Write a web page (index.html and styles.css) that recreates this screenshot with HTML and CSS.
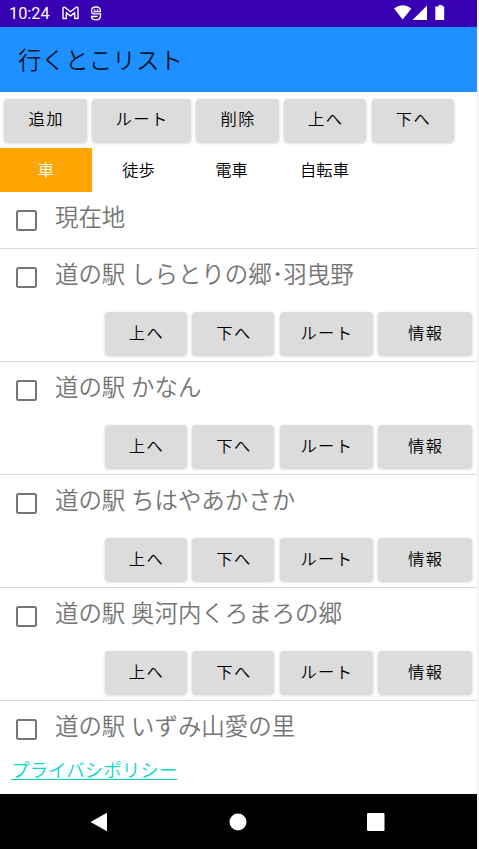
FILE: index.html
```html
<!DOCTYPE html>
<html lang="ja">
<head>
<meta charset="utf-8">
<title>行くとこリスト</title>
<link rel="stylesheet" href="styles.css">
</head>
<body>
<div class="screen">
  <div class="status">
    <span class="clock">10:24</span>
    <svg class="mail" width="17" height="14" viewBox="0 0 17 14" fill="none" stroke="#fff" stroke-width="1.4" stroke-linejoin="round"><path d="M1 12.5V2.2Q1.2.8 2.8 1.2L8.5 5.8 14.2 1.2Q15.8.8 16 2.2V12.5H12.7V6.6L8.5 10 4.3 6.6V12.5Z"/></svg>
    <svg class="debug" width="12" height="15" viewBox="0 0 12 15" fill="none" stroke="#fff" stroke-width="1.3"><path d="M11 5.500H3.500M10.500 5Q10.500 1 6 1T1.500 4.500Q1.500 7.800 4 7.800H10.500V9.500Q10.500 13.800 6 13.800T1.500 10.500H7.500"/><path d="M4.500 3V4.500M7.500 3V4.500" stroke-width="1"/></svg>
    <svg class="signals" width="52" height="16" viewBox="0 0 52 16" fill="#fff"><path d="M0 3.5Q8.7-3.2 17.4 3.5L8.7 14.5ZM33 .5V15H18.5ZM42.8 1.500H44.600V0H48.400V1.500H50.200V15H41.300V1.500Z"/></svg>
  </div>
  <header class="title">行くとこリスト</header>
  <div class="toolbar">
    <button class="btn">追加</button><button class="btn wide">ルート</button><button class="btn">削除</button><button class="btn">上へ</button><button class="btn">下へ</button>
  </div>
  <nav class="tabs"><span class="tab active">車</span><span class="tab">徒歩</span><span class="tab">電車</span><span class="tab">自転車</span></nav>
  <main class="list">
    <section class="row here"><div class="place"><i class="check"></i><span>現在地</span></div></section>
    <section class="row"><div class="place"><i class="check"></i><span>道の駅 しらとりの郷･羽曳野</span></div>
      <div class="actions"><button class="btn">上へ</button><button class="btn">下へ</button><button class="btn route">ルート</button><button class="btn route">情報</button></div></section>
    <section class="row"><div class="place"><i class="check"></i><span>道の駅 かなん</span></div>
      <div class="actions"><button class="btn">上へ</button><button class="btn">下へ</button><button class="btn route">ルート</button><button class="btn route">情報</button></div></section>
    <section class="row"><div class="place"><i class="check"></i><span>道の駅 ちはやあかさか</span></div>
      <div class="actions"><button class="btn">上へ</button><button class="btn">下へ</button><button class="btn route">ルート</button><button class="btn route">情報</button></div></section>
    <section class="row"><div class="place"><i class="check"></i><span>道の駅 奥河内くろまろの郷</span></div>
      <div class="actions"><button class="btn">上へ</button><button class="btn">下へ</button><button class="btn route">ルート</button><button class="btn route">情報</button></div></section>
    <section class="row last"><div class="place"><i class="check"></i><span>道の駅 いずみ山愛の里</span></div></section>
  </main>
  <footer class="policy"><a class="link">プライバシポリシー</a></footer>
  <div class="navbar">
    <svg width="477" height="55" viewBox="0 0 477 55" fill="#fff"><path d="M107 18.7V37.3L90.5 28Z"/><circle cx="238" cy="28" r="8.5"/><rect x="367" y="19" width="17.5" height="18" rx="1"/></svg>
  </div>
</div>
</body>
</html>
```
FILE: styles.css
```css
* { box-sizing: border-box; }
body { margin: 0; background: #f4f4f4; font-family: Roboto, "Noto Sans CJK JP", sans-serif; font-weight: 350; }
.screen { width: 477px; height: 849px; display: flex; flex-direction: column; background: #fff; overflow: hidden; }
.status { flex: none; height: 27px; background: #3700b3; color: #fff; display: flex; align-items: flex-start; padding-left: 9px; }
.clock { width: 53px; font-size: 16.3px; line-height: 27px; font-weight: 400; }
.mail { margin-top: 6px; }
.debug { margin: 6px 0 0 11px; }
.signals { margin: 5px 31px 0 auto; }
.title { flex: none; height: 65px; background: #1e90ff; color: rgba(0, 0, 0, .87); font-size: 23.4px; line-height: 68px; padding-left: 18px; letter-spacing: .2px; }
.toolbar { flex: none; height: 56px; display: flex; gap: 5.5px; padding: 6.5px 0 0 4.4px; }
.btn { width: 82.2px; height: 43px; border: 0; border-radius: 4px; background: #dcdcdc; color: #000; font: 350 16.3px/42px Roboto, "Noto Sans CJK JP", sans-serif; letter-spacing: 1.46px; padding: 1px 0 0 1.4px; box-shadow: 0 1px 3px rgba(0, 0, 0, .22); }
.toolbar .btn { padding-top: 0; }
.toolbar .wide { width: 98.8px; }
.tabs { flex: none; height: 44px; display: flex; font-size: 16.3px; line-height: 45px; color: #000; }
.tab { width: 93px; text-align: center; }
.active { width: 92px; background: orange; color: #fff; }
.list { flex: none; height: 562px; overflow: hidden; }
.row { height: 113px; border-bottom: 1px solid #dadada; }
.here { height: 57px; }
.last { border: 0; height: 53px; }
.place { height: 50px; display: flex; align-items: flex-start; padding-left: 16.4px; color: #757575; font-size: 23.45px; line-height: 53px; white-space: nowrap; }
.check { width: 21px; height: 21px; margin: 17.5px 17.6px 0 0; border: 2px solid #757575; border-radius: 2.5px; }
.actions { display: flex; gap: 5.2px; padding: 13px 0 0 104.8px; }
.route { width: 93.5px; }
.policy { flex: none; height: 40px; padding-left: 11px; font-size: 18.5px; line-height: 34px; color: #03dac5; }
.link { text-decoration: underline; text-decoration-thickness: 1px; text-underline-offset: 2px; }
.navbar { flex: none; height: 55px; background: #000; }
.navbar svg { display: block; }
```
